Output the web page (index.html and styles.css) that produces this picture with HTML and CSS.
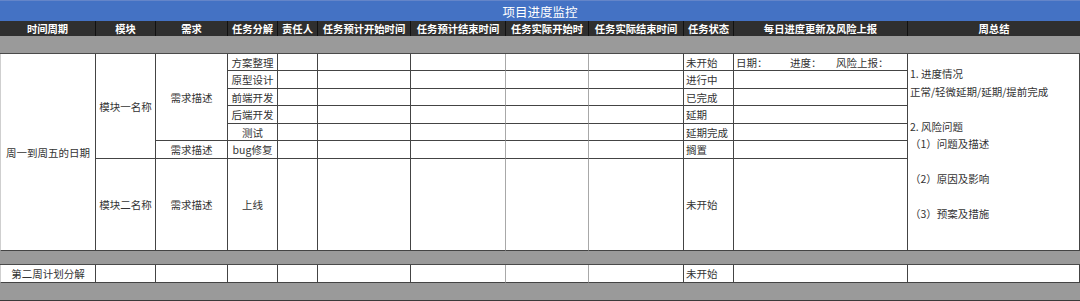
FILE: index.html
```html
<!DOCTYPE html>
<html lang="zh-CN">
<head>
<meta charset="utf-8">
<title>项目进度监控</title>
<link rel="stylesheet" href="styles.css">
</head>
<body>
<table class="sheet">
  <colgroup>
    <col class="c-period"><col class="c-module"><col class="c-req"><col class="c-task"><col class="c-owner">
    <col class="c-t1"><col class="c-t2"><col class="c-t3"><col class="c-t4"><col class="c-status">
    <col class="c-daily"><col class="c-summary">
  </colgroup>
  <tr class="r-title"><td class="title" colspan="12">项目进度监控</td></tr>
  <tr class="r-head">
    <th>时间周期</th><th>模块</th><th>需求</th><th>任务分解</th><th>责任人</th>
    <th>任务预计开始时间</th><th>任务预计结束时间</th><th>任务实际开始时</th><th>任务实际结束时间</th><th>任务状态</th>
    <th>每日进度更新及风险上报</th><th>周总结</th>
  </tr>
  <tr class="r-gray-a"><td class="gray" colspan="12"></td></tr>
  <tr class="r-17">
    <td class="edge ctr" rowspan="7">周一到周五的日期</td>
    <td class="ctr" rowspan="6">模块一名称</td>
    <td class="ctr" rowspan="5">需求描述</td>
    <td class="ctr">方案整理</td><td></td><td></td><td class="light"></td><td class="light"></td><td></td>
    <td class="lft">未开始</td>
    <td class="lft"><span class="f-date">日期：</span><span class="f-prog">进度：</span><span>风险上报：</span></td>
    <td class="summary" rowspan="7">
      <div>1. 进度情况</div>
      <div>正常/轻微延期/延期/提前完成</div>
      <div class="gap">2. 风险问题</div>
      <div>（1）问题及描述</div>
      <div class="gap">（2）原因及影响</div>
      <div class="gap">（3）预案及措施</div>
    </td>
  </tr>
  <tr class="r-18">
    <td class="ctr">原型设计</td><td></td><td></td><td class="light"></td><td class="light"></td><td></td>
    <td class="lft">进行中</td><td></td>
  </tr>
  <tr class="r-17">
    <td class="ctr">前端开发</td><td></td><td></td><td class="light"></td><td class="light"></td><td></td>
    <td class="lft">已完成</td><td></td>
  </tr>
  <tr class="r-18">
    <td class="ctr">后端开发</td><td></td><td></td><td class="light"></td><td class="light"></td><td></td>
    <td class="lft">延期</td><td></td>
  </tr>
  <tr class="r-17">
    <td class="ctr">测试</td><td></td><td></td><td class="light"></td><td class="light"></td><td></td>
    <td class="lft">延期完成</td><td></td>
  </tr>
  <tr class="r-18">
    <td class="ctr">需求描述</td>
    <td class="ctr">bug修复</td><td></td><td></td><td class="light"></td><td class="light"></td><td></td>
    <td class="lft">搁置</td><td></td>
  </tr>
  <tr class="r-big">
    <td class="ctr">模块二名称</td>
    <td class="ctr">需求描述</td>
    <td class="ctr">上线</td><td></td><td></td><td class="light"></td><td class="light"></td><td></td>
    <td class="lft">未开始</td><td></td>
  </tr>
  <tr class="r-gray-b"><td class="gray" colspan="12"></td></tr>
  <tr class="r-18">
    <td class="edge ctr">第二周计划分解</td>
    <td></td><td></td><td></td><td></td><td></td><td class="light"></td><td class="light"></td><td></td>
    <td class="lft">未开始</td><td></td><td></td>
  </tr>
  <tr class="r-gray-c"><td class="gray last" colspan="12"></td></tr>
</table>
</body>
</html>
```

FILE: styles.css
```css
html, body {
  margin: 0;
  padding: 0;
  background: #ffffff;
}

.sheet {
  width: 1080px;
  table-layout: fixed;
  border-collapse: separate;
  border-spacing: 0;
  font-family: "Noto Sans CJK SC", "Noto Sans", sans-serif;
  font-size: 10.5px;
  color: #333333;
}

.c-period { width: 96px; }
.c-module { width: 60px; }
.c-req { width: 72px; }
.c-task { width: 50px; }
.c-owner { width: 40px; }
.c-t1 { width: 93px; }
.c-t2 { width: 95px; }
.c-t3 { width: 83px; }
.c-t4 { width: 95px; }
.c-status { width: 50px; }
.c-daily { width: 174px; }
.c-summary { width: 172px; }

.sheet td,
.sheet th {
  padding: 0;
  line-height: 15px;
  border-right: 1px solid #444444;
  border-bottom: 1px solid #444444;
  white-space: nowrap;
  overflow: hidden;
  box-sizing: border-box;
}

.r-title { height: 21px; }
.r-head { height: 15px; }
.r-gray-a { height: 18px; }
.r-17 { height: 17px; }
.r-18 { height: 18px; }
.r-big { height: 92px; }
.r-gray-b { height: 14px; }
.r-gray-c { height: 18px; }

.sheet td.title {
  background: #4472c4;
  border-top: 1px solid #6485c9;
  border-right: none;
  border-bottom: none;
  color: #ffffff;
  font-size: 12.5px;
  text-align: center;
  line-height: 19px;
}

.sheet th {
  background: #2f2f2f;
  color: #ffffff;
  font-weight: bold;
  font-size: 10.3px;
  text-align: center;
  border-right: 1px solid #111111;
  border-bottom: none;
}

.sheet th:last-child {
  border-right: none;
}

.sheet td.gray {
  background: #9a9a9a;
  border-right: none;
  border-bottom: 1px solid #4a4a4a;
}

.sheet td.gray.last {
  border-bottom: 1px solid #3a3a3a;
}

.sheet td.edge {
  border-left: 1px solid #cfcfcf;
}

.sheet td.light {
  border-right: 1px solid #a8a8a8;
}

.ctr {
  text-align: center;
  vertical-align: middle;
}

.lft {
  text-align: left;
  vertical-align: middle;
  padding-left: 2px !important;
}

.f-date {
  display: inline-block;
  width: 54px;
}

.f-prog {
  display: inline-block;
  width: 46px;
}

.sheet td.summary {
  vertical-align: top;
  padding: 11px 0 0 2px;
  line-height: 17.5px;
}

.summary .gap {
  margin-top: 17.5px;
}
```
